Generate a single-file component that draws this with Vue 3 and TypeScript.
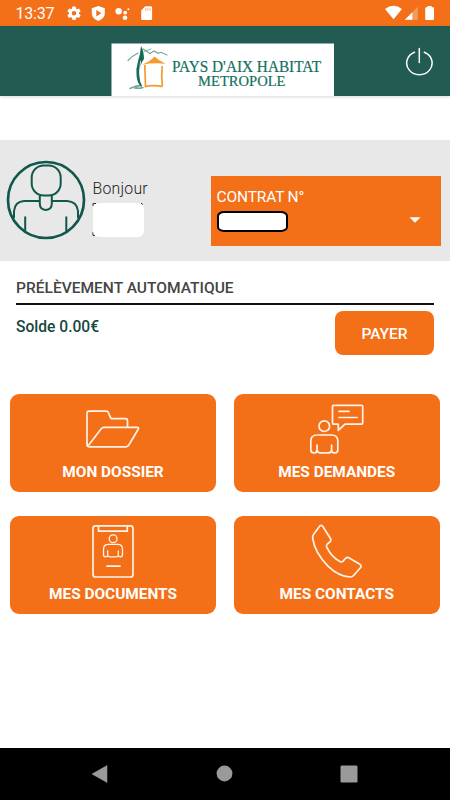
<script setup lang="ts">
type IconName = 'folder' | 'requests' | 'documents' | 'phone'

interface Tile {
  label: string
  icon: IconName
}

const tiles: Tile[] = [
  { label: 'MON DOSSIER', icon: 'folder' },
  { label: 'MES DEMANDES', icon: 'requests' },
  { label: 'MES DOCUMENTS', icon: 'documents' },
  { label: 'MES CONTACTS', icon: 'phone' },
]
</script>

<template>
  <div class="screen">
    <div class="status">
      <span class="clock">13:37</span>
      <svg class="status-left" width="90" height="26" viewBox="64 0 90 26" fill="#fff">
        <g transform="translate(65.6 4.8) scale(.7)">
          <path d="M19.14 12.94c.04-.3.06-.61.06-.94 0-.32-.02-.64-.07-.94l2.03-1.58a.49.49 0 0 0 .12-.61l-1.92-3.32a.488.488 0 0 0-.59-.22l-2.39.96c-.5-.38-1.03-.7-1.62-.94l-.36-2.54a.484.484 0 0 0-.48-.41h-3.84c-.24 0-.43.17-.47.41l-.36 2.54c-.59.24-1.13.57-1.62.94l-2.39-.96c-.22-.08-.47 0-.59.22L2.74 8.87c-.12.21-.08.47.12.61l2.03 1.58c-.05.3-.09.63-.09.94s.02.64.07.94l-2.03 1.58a.49.49 0 0 0-.12.61l1.92 3.32c.12.22.37.29.59.22l2.39-.96c.5.38 1.03.7 1.62.94l.36 2.54c.05.24.24.41.48.41h3.84c.24 0 .44-.17.47-.41l.36-2.54c.59-.24 1.13-.56 1.62-.94l2.39.96c.22.08.47 0 .59-.22l1.92-3.32a.49.49 0 0 0-.12-.61l-2.01-1.58zM12 15.2a3.2 3.2 0 1 1 0-6.4 3.2 3.2 0 0 1 0 6.4z" />
        </g>
        <path d="M98.300 6l6.500 2.300v5q0 5-6.500 7.700-6.500-2.700-6.500-7.700v-5z" />
        <path d="M96.300 10v6.600l5-3.300z" fill="#f37019" />
        <circle cx="118.700" cy="11.200" r="3.200" />
        <circle cx="125.200" cy="12.700" r="1.900" />
        <circle cx="128.400" cy="9.300" r="1" />
        <circle cx="125" cy="17.700" r="2.300" />
        <path d="M145.300 6.300h5.600q1.200 0 1.200 1.200v11.200q0 1.200-1.200 1.200h-8.500q-1.200 0-1.200-1.200v-8.300z" />
        <path d="M145 8.300h1.300v2.500H145zm2.200 0h1.300v2.500h-1.300zm2.200 0h1.300v2.500h-1.300z" fill="#f9b98c" />
      </svg>
      <svg class="status-right" width="56" height="26" viewBox="384 0 56 26" fill="#fff">
        <path d="M385 9q8.500-6.300 17 0l-8.500 10.300z" />
        <path d="M417.800 6.800v13h-13z" fill-opacity=".3" />
        <path d="M412.300 12.300v7.500h-7.500z" />
        <path d="M427.500 6h4.200v1.300h1.200q1.100 0 1.100 1v10.400q0 1.200-1.100 1.200h-6.600q-1.100 0-1.100-1.200V8.300q0-1 1.100-1h1.200z" />
      </svg>
    </div>

    <header class="header">
      <svg class="logo" width="223" height="53" viewBox="111 43 223 53">
        <rect x="111.500" y="43.500" width="222.500" height="52.500" fill="#fff" />
        <g fill="none" stroke="#79a79c" stroke-linecap="round">
          <path d="M128 60.500q5-5 10-7.500M143 49l7 4.500 4-2.500 4 2.300 3-1 6 2.700" stroke-width="1.200" />
          <path d="M144 51.500l7-2.500" stroke-width=".9" />
          <path d="M130 88.500q5-3 12-3.500-5 1-7 3 4 .8 8-.5" stroke-width="1.500" />
        </g>
        <path d="M141 46q2.800 4.800 3 13l-1.700 2.500q-4.600 8.500-1.800 20.500l1.500 5.500q-4.500-3.500-5.400-11-1-8 1.600-16 2.200-6.500 2.800-14.500z" fill="#146b5a" />
        <path d="M140.600 61q-2.300 11 .1 21" fill="none" stroke="#fff" stroke-width=".8" />
        <path d="M142 64.700q8-3 12.500-8.200 4 4 11 7.300-12-1.400-23.500.9z" fill="#f59a2e" />
        <path d="M144.800 65l.7 21.500M162.200 66q-1.100 10 .2 20M144.500 86.600q9-1.800 18 0" fill="none" stroke="#f59a2e" stroke-width="1.700" />
        <g class="logo-text" fill="#137060" stroke="#137060" stroke-width=".2">
          <text x="172" y="72.200" font-size="16" textLength="149" lengthAdjust="spacingAndGlyphs">PAYS D'AIX HABITAT</text>
          <text x="198" y="86.200" font-size="15.500" textLength="87.500" lengthAdjust="spacingAndGlyphs">METROPOLE</text>
        </g>
      </svg>
      <svg class="power" width="30" height="32" viewBox="404 46 30 32" fill="none" stroke="#fff" stroke-width="1.500" stroke-linecap="round">
        <path d="M419.300 48.500v14M414.500 52.200a12.700 11.700 0 1 0 9.800 0" />
      </svg>
    </header>

    <section class="profile">
      <svg class="avatar" width="80" height="80" viewBox="6 160 80 80" fill="none" stroke="#11574b" stroke-width="2">
        <circle cx="46" cy="200" r="38" stroke-width="2.700" />
        <rect x="31.700" y="165.500" width="29" height="30" rx="12" />
        <path d="M39.800 195.600v8q0 6 6 6.500 6-.5 6-6.500v-8M39.500 201H24q-9 .5-10 10v7M52 201h15q10 .5 11 10v7M25.200 216.500V232M66.300 216.500V232" />
      </svg>
      <div class="greeting">
        <span>Bonjour</span>
        <svg class="name" width="53" height="36" viewBox="0 0 53 36">
          <path d="M1 4V1.500h3M49 1.500h1V3M1 30v3.500h3" fill="none" stroke="#333" />
          <rect x="1" y="1" width="51" height="34" rx="6" fill="#fff" />
        </svg>
      </div>
      <div class="contract">
        <div class="contract-info">
          <span>CONTRAT N°</span>
          <div class="number"></div>
        </div>
        <svg class="caret" width="12" height="6" viewBox="0 0 12 6"><path d="M.5.300h11L6 5.800z" fill="#fff" /></svg>
      </div>
    </section>

    <section class="balance">
      <h2>PRÉLÈVEMENT AUTOMATIQUE</h2>
      <div class="balance-row">
        <strong>Solde 0.00€</strong>
        <button class="pay" type="button">PAYER</button>
      </div>
    </section>

    <main class="tiles">
      <button v-for="tile in tiles" :key="tile.icon" class="tile" type="button">
        <svg v-if="tile.icon === 'folder'" class="icon" viewBox="73 393.500 80 68">
          <path d="M89 446.300q-2-.2-2-2.300v-31q0-2.300 2.300-2.300h17q1.300 0 2 1.300l2.200 5.200q.4 1 1.600 1h13.400q2 0 2 2v6M88 445.500l13-17q1.300-1.700 3-1.700h33q2.200 0 1.200 2l-9.200 15.500q-1.200 2-3 2H89" />
        </svg>
        <svg v-else-if="tile.icon === 'requests'" class="icon" viewBox="297 393.500 80 68">
          <path d="M333.500 404.800h28.200q1 0 1 1v16.800q0 1-1 1H345l-6.700 6.200v-6.200h-4.800q-1 0-1-1v-16.800q0-1 1-1zM339 410.800h10M339 417h18" />
          <circle cx="324.300" cy="425.700" r="5.300" />
          <path d="M317 444.500v5q0 3-2.800 3-3.400 0-3.400-3v-9q0-6 6.500-6h14q6.500 0 6.500 6v9q0 3-3.400 3-2.800 0-2.800-3v-5M317 449.500q1 2.800 3 2.800h8.600q2.500 0 3-2.800" />
        </svg>
        <svg v-else-if="tile.icon === 'documents'" class="icon" viewBox="73 516 80 68">
          <rect x="93" y="525.800" width="40" height="51.200" rx="2.500" />
          <path d="M98.500 526v5.200h28.800V526M107 566.200h13" />
          <g stroke-width="1.300">
            <circle cx="113.100" cy="538.700" r="3.900" />
            <path d="M107.700 551v4.500q-.2 1.300-2 1.300-2.200 0-2.200-2v-5.600q0-4.800 5-4.800h9q5 0 5 4.800v5.600q0 2-2.200 2-1.800 0-2-1.300V551M107.700 555.500q.6 1.300 2 1.300h6.600q1.500 0 2-1.300" />
          </g>
        </svg>
        <svg v-else class="icon" viewBox="297 516 80 68">
          <path d="M320 525.800q2-1 3 1l7.600 12q1 1.600-.3 2.700l-3 2.600q-1.300 1.200-.7 2.800 4.500 10 13.700 14.800 1.600.8 2.700-.5l3-3.200q1.200-1 2.800-.3l11 6.500q2.200 1.300.8 3.300l-7 8q-1.300 1.600-3.800 1.500-11-.7-21.600-10.700-13.500-13.800-15.500-28-.4-2.200 1-4z" />
        </svg>
        <span>{{ tile.label }}</span>
      </button>
    </main>

    <nav class="navbar">
      <svg width="18" height="20" viewBox="0 0 18 20"><path d="M16 1.500v17L1 10z" stroke="#9a9a9a" stroke-width=".5" stroke-linejoin="round" /></svg>
      <svg width="18" height="20" viewBox="0 0 18 20"><circle cx="9.500" cy="9.500" r="7.900" /></svg>
      <svg width="18" height="20" viewBox="0 0 18 20"><rect x=".5" y="1.500" width="17" height="17" rx="1.300" /></svg>
    </nav>
  </div>
</template>

<style>
body {
  margin: 0;
}
</style>

<style scoped>
.screen {
  width: 450px;
  height: 800px;
  display: flex;
  flex-direction: column;
  overflow: hidden;
  background: #fff;
  font-family: Roboto, sans-serif;
}

.screen * {
  box-sizing: border-box;
}

svg {
  display: block;
  flex: none;
}

.status {
  height: 26px;
  display: flex;
  flex: none;
  align-items: center;
  padding: 0 10px 0 15.5px;
  background: #f37019;
  color: #fff;
}

.clock {
  width: 48.5px;
  padding-top: 2px;
  font-size: 16px;
  line-height: 20px;
  letter-spacing: -0.2px;
}

.status-right {
  margin-left: auto;
}

.header {
  height: 70px;
  display: flex;
  flex: none;
  align-items: flex-end;
  padding: 0 16px 0 111px;
  background: #225b51;
  box-shadow: 0 1px 3px rgba(0, 0, 0, 0.15);
}

.logo-text {
  font-family: "Liberation Serif", serif;
}

.power {
  margin: 0 0 18px auto;
}

.profile {
  height: 120.5px;
  display: flex;
  flex: none;
  align-items: flex-start;
  margin-top: 44px;
  padding-left: 6px;
  background: #e8e8e8;
}

.avatar {
  margin-top: 20px;
}

.greeting {
  width: 118.5px;
  padding: 38px 0 0 6.5px;
  color: #222;
  font-size: 15.8px;
  line-height: 20px;
}

.greeting span {
  display: block;
  height: 20px;
  padding-top: 1px;
  font-weight: 300;
  letter-spacing: 0.25px;
}

.name {
  margin: 4px 0 0 -1px;
}

.contract {
  width: 230px;
  height: 70px;
  display: flex;
  align-items: flex-start;
  justify-content: space-between;
  margin: 36px 0 0 6.5px;
  padding: 12px 20px 0 5.5px;
  background: #f37019;
  color: #fff;
  font-size: 15.5px;
  line-height: 18px;
}

.contract-info span {
  letter-spacing: -0.15px;
}

.number {
  width: 71px;
  height: 21px;
  margin-top: 5px;
  border: 2px solid #000;
  border-radius: 7px / 5px;
  background: #fff;
}

.caret {
  margin-top: 29px;
}

.balance {
  height: 133px;
  flex: none;
  padding: 17px 16px 0;
}

.balance h2 {
  height: 27px;
  margin: 0;
  border-bottom: 2px solid #111;
  color: #444;
  font-size: 15.55px;
  font-weight: 500;
  line-height: 21px;
}

.balance-row {
  display: flex;
  align-items: flex-start;
  justify-content: space-between;
  padding-top: 6.5px;
}

.balance strong {
  padding-top: 6px;
  color: #17483f;
  font-size: 15.6px;
  font-weight: 500;
  line-height: 20px;
}

.pay {
  width: 99px;
  height: 44px;
  padding: 2px 0 0;
  border: 0;
  border-radius: 8px;
  background: #f37019;
  color: #fff;
  font: 500 15.5px/20px Roboto, sans-serif;
}

.tiles {
  display: grid;
  flex: 1;
  grid-template-columns: 206px 206.5px;
  grid-auto-rows: 98px;
  gap: 24.5px 17.5px;
  padding: 0 10px;
}

.tile {
  display: flex;
  flex-direction: column;
  align-items: center;
  padding: 0;
  border: 0;
  border-radius: 9px;
  background: #f37019;
  color: #fff;
  font: 700 15.4px/18px Roboto, sans-serif;
}

.tile span {
  padding-top: 1px;
}

.icon {
  width: 80px;
  height: 68px;
  fill: none;
  stroke: #fff3e9;
  stroke-width: 1.7;
  stroke-linecap: round;
  stroke-linejoin: round;
}

.navbar {
  height: 52.5px;
  display: flex;
  flex: none;
  align-items: center;
  justify-content: space-between;
  padding: 0 92px 0 90.5px;
  background: #000;
  fill: #9a9a9a;
}
</style>
